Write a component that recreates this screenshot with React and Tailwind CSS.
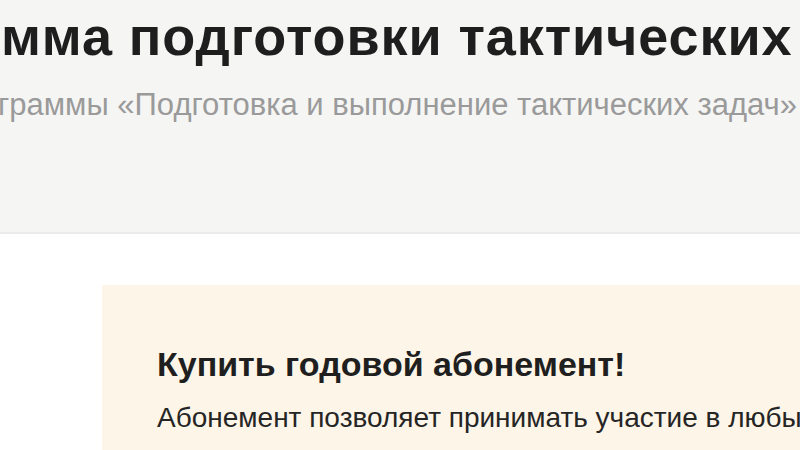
import React from 'react';

export default function App() {
  return (
    <div className="w-[800px] h-[450px] overflow-hidden bg-white" style={{ fontFamily: '"Liberation Sans", Arial, sans-serif' }}>
      {/* Page header */}
      <div className="h-[234px] bg-[#f5f5f4] border-b-2 border-[#ebebeb] overflow-hidden">
        <h1 className="whitespace-nowrap pt-[6px] pl-[1px] text-[54px] leading-[60px] tracking-[0.9px] font-bold text-[#1e1e1e]">
          мма подготовки тактических групп
        </h1>
        <p className="whitespace-nowrap mt-[21px] text-[31px] leading-[36px] text-[#9a9a9a]">
          <span className="inline-block -ml-[2px]">граммы «Подготовка и выполнение тактических задач»</span>
        </p>
      </div>

      {/* Subscription card */}
      <div className="pt-[51px] pl-[102px]">
        <div className="bg-[#fdf5e7] h-[200px] pl-[55px] pt-[59px] whitespace-nowrap">
          <h2 className="text-[34px] leading-[40px] font-bold text-[#1f1f1f]">Купить годовой абонемент!</h2>
          <p className="mt-[17px] text-[28px] leading-[34px] text-[#252525]">
            Абонемент позволяет принимать участие в любых тренировках
          </p>
        </div>
      </div>
    </div>
  );
}
